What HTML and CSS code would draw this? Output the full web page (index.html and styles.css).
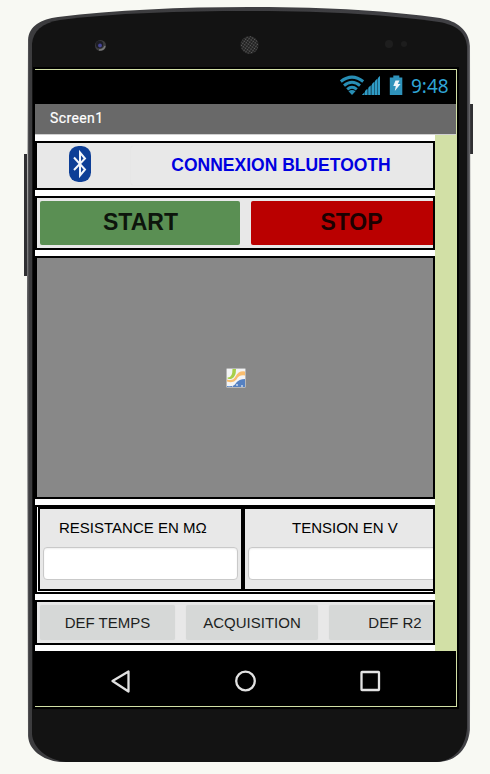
FILE: index.html
```html
<!DOCTYPE html>
<html lang="fr">
<head>
<meta charset="utf-8">
<title>Screen1</title>
<link rel="stylesheet" href="styles.css">
</head>
<body>
<div class="viewer">
  <svg class="phone-body" width="490" height="774" viewBox="0 0 490 774">
    <defs>
      <linearGradient id="rim" x1="0" x2="1" y1="0" y2="0">
        <stop offset="0" stop-color="#69696b"/><stop offset=".006" stop-color="#3c3c3e"/>
        <stop offset=".994" stop-color="#404044"/><stop offset="1" stop-color="#77777a"/>
      </linearGradient>
      <pattern id="mesh" width="2.500" height="2.500" patternUnits="userSpaceOnUse" patternTransform="rotate(35)">
        <rect width="2.500" height="2.500" fill="#1b1b1b"/><circle cx="1.250" cy="1.250" r=".8" fill="#626262"/>
      </pattern>
    </defs>
    <path d="M27 154h-3v122h3z" fill="#303032"/>
    <path d="M469 104h4v50h-4z" fill="#303032"/>
    <path d="M27 300L28 40C29 26 41 19 58 17C115 10 180 7 249 7C330 7 390 11 440 18C457 21 469 30 470 46L470.500 300L470 730C468 748 457 762 437 762H60C42 760 29 750 28 736Z" fill="url(#rim)"/>
    <path d="M32 300L32 44C33 31 42 23 60 20C115 13 180 11 249 11C330 11 390 15 439 22C456 25 466 32 467 47V728C466 746 455 761 436 762H66C47 760 33 748 32 734Z" fill="#131313"/>
    <circle cx="100.500" cy="45.500" r="5.500" fill="#3b3b3d"/>
    <circle cx="99.500" cy="44.500" r="3.700" fill="#1d1d24"/>
    <circle cx="100" cy="45.500" r="1.900" fill="#454596"/>
    <path d="M99 50q5 0 6-4" stroke="#777" stroke-width="1.500" fill="none"/>
    <circle cx="249.500" cy="45" r="9" fill="url(#mesh)"/>
    <circle cx="389" cy="44" r="4" fill="#1e1e1e"/><circle cx="404" cy="44" r="3" fill="#1d1d1d"/>
  </svg>
  <main class="screen">
    <header class="status">
      <svg class="status-icons" width="64" height="22" viewBox="0 0 64 22">
        <g fill="none" stroke="#288eb5" stroke-width="3">
          <path d="M.8 6.500Q12-2.300 23.200 6.500"/><path d="M4 10.600Q12 3.900 20 10.600"/><path d="M7.200 14.300Q12 10.300 16.800 14.300"/>
        </g>
        <path d="M8.500 16.300Q12 13.800 15.500 16.300L12 20Z" fill="#288eb5"/>
        <path d="M22 20L40 1V20Z" fill="#1c5f7a"/>
        <path d="M22 20l2-2v2zM25 20v-4l2-2v6zM28.500 20v-7.500l2-2V20zM32 20V9l2-2v13zM35 20V6l2-2v16zM38 20V3l2-2v19z" fill="#2f9cc6"/>
        <path d="M49.800 2.500h3.500V.5h6v2h3V20H49.800z" fill="#2f93bb"/>
        <path d="M55.500 5.500h4L57.800 9h2.700l-5.700 7 1-5h-2.500z" fill="#eef6fa"/>
      </svg>
      <span class="clock">9:48</span>
    </header>
    <div class="title">Screen1</div>
    <div class="form">
      <div class="column">
        <section class="row bluetooth">
          <svg class="bt-icon" width="22" height="36" viewBox="0 0 22 36">
            <rect width="22" height="36" rx="9.500" fill="#0d3e96"/>
            <path d="M5 11.500L16 23.500L11 29.500V6.500L16 12.500L5 24" fill="none" stroke="#f2f5fa" stroke-width="2"/>
          </svg>
          <button class="connect">CONNEXION BLUETOOTH</button>
        </section>
        <section class="row actions">
          <button class="big start">START</button>
          <button class="big stop">STOP</button>
        </section>
        <section class="canvas">
          <svg width="20" height="20" viewBox="0 0 20 20">
            <rect x=".5" y=".5" width="19" height="19" rx="1" fill="#f3f4f5" stroke="#b7b7b7"/>
            <path d="M6.500 1h3.500q0 8-4 9.500-2 1-4.500 0V9.500q5 .5 5-8.500" fill="#a7cf48"/>
            <path d="M1 11.500q6 2 8.500-3 3-6 9.500-5v4q-6-1-8.500 4-3 4-9.500 2z" fill="#f9bd6e"/>
            <path d="M1 18q7 1 9-3 3-4 9-4v8H1z" fill="#5581c2"/>
            <path d="M6 18h1M10 17h2M15 18h2" stroke="#fff"/>
          </svg>
        </section>
        <section class="measures">
          <div class="cell"><label class="name">RESISTANCE EN MΩ</label><div class="field"></div></div>
          <div class="cell tension"><label class="name">TENSION EN V</label><div class="field"></div></div>
        </section>
        <section class="row tools">
          <button class="tool first">DEF TEMPS</button>
          <button class="tool">ACQUISITION</button>
          <button class="tool">DEF R2</button>
        </section>
      </div>
    </div>
    <footer class="nav">
      <svg width="421" height="55" viewBox="0 0 421 55" fill="none" stroke="#e2e2e2" stroke-width="2.300" stroke-linejoin="round">
        <path d="M93.500 20.500V40.500L77.500 30Z"/><circle cx="210.500" cy="30" r="9.300"/><rect x="326.500" y="21" width="17.500" height="18" rx=".5"/>
      </svg>
    </footer>
  </main>
</div>
</body>
</html>
```
FILE: styles.css
```css
*, *::before { box-sizing: border-box; }
body { margin: 0; background: #f8f9f3; font-family: "Liberation Sans", Arial, sans-serif; }
.viewer { position: relative; width: 490px; height: 774px; padding: 67px 0 0 33px; overflow: hidden; }
.phone-body { position: absolute; left: 0; top: 0; }
.screen {
  position: relative; width: 426px; height: 642px;
  padding: 3px 3px 3px 2px; background: #000;
  display: flex; flex-direction: column;
}
.screen::before {
  content: ""; position: absolute; left: 2px; top: 2px; width: 422px; height: 638px;
  border: solid #d2e0a6; border-width: 1px 1px 1px 0; pointer-events: none; z-index: 1;
}
.status { height: 34px; display: flex; justify-content: flex-end; align-items: center; padding-right: 7px; flex: none; }
.status-icons { margin: -2px 7px 0 0; }
.clock { font: 19px/32px "Noto Sans", sans-serif; color: #2fa5d5; width: 38px; margin-top: -2px; white-space: nowrap; }
.title {
  width: 421px; height: 31px; flex: none; padding-left: 15px; background: #696969; color: #fff;
  border-bottom: 1px solid #d0d0d0; font: 400 14px/28px Roboto, sans-serif; letter-spacing: .4px;
  -webkit-text-stroke: .2px #fff;
}
.form { width: 422px; height: 516px; flex: none; background: #d2e0a6; }
.column {
  width: 400px; height: 516px; padding: 6px 0; background: #fff;
  display: flex; flex-direction: column; gap: 6px;
}
.row { border: 2px solid #000; background: #e8e8e8; display: flex; overflow: hidden; flex: none; padding: 3px; }
button { border: 0; padding: 0; margin: 0; flex: none; font-family: inherit; border-radius: 2px; white-space: nowrap; }
.bluetooth { height: 49px; }
.bt-icon { margin: 0 40px 0 29px; flex: none; }
.connect {
  width: 300px; height: 39px; background: #e8e8e8; color: #0000e0;
  font-size: 17.5px; font-weight: bold; box-shadow: 0 0 1px #d4d4d4;
}
.actions { height: 54px; gap: 11px; }
.big { width: 200px; height: 44px; font-size: 23px; font-weight: bold; padding: 0 0 2px 1px; }
.start { background: #5a8f53; color: #0d150c; }
.stop { background: #ba0000; color: #1c0000; }
.canvas { height: 243px; flex: none; border: 2px solid #000; background: #888; display: flex; align-items: center; justify-content: center; padding-left: 2px; }
.measures { height: 89px; flex: none; border: 2px solid #000; padding: 0 0 1px 1px; display: flex; overflow: hidden; }
.cell { width: 205px; height: 84px; flex: none; border: 2px solid #000; background: #e8e8e8; padding: 0 3px; }
.name { display: block; height: 38px; padding-left: 16px; font-size: 15px; line-height: 37px; color: #000; }
.field { height: 33px; border: 1px solid #c9c9c9; border-radius: 4px; background: #fff; box-shadow: inset 0 1px 2px #eee; }
.tension { width: 220px; }
.tension .name { padding-left: 44px; }
.tools { height: 45px; gap: 11px; }
.tool { width: 132px; height: 35px; background: #d6d8d7; color: #1d1f1e; font-size: 15px; box-shadow: 0 0 1px #d6d8d7; }
.first { width: 135px; }
.nav { height: 55px; flex: none; }
.nav svg { display: block; }
```
